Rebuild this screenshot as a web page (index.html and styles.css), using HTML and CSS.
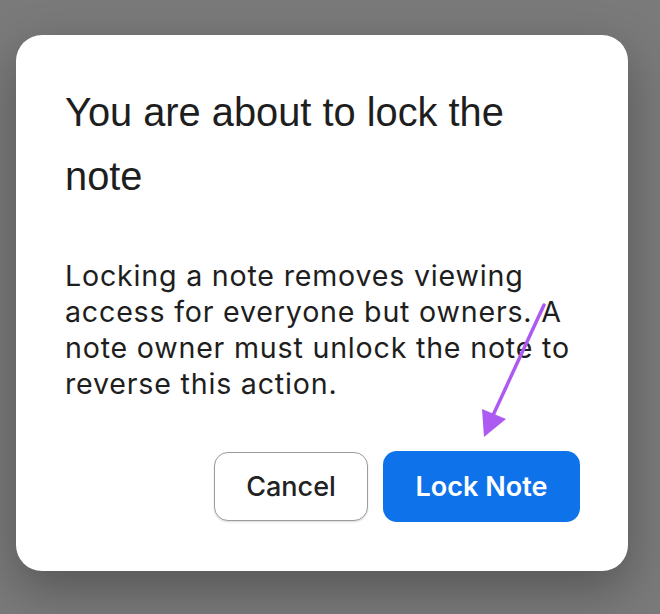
FILE: index.html
```html
<!DOCTYPE html>
<html lang="en">

<head>
    <meta charset="UTF-8">
    <meta name="viewport" content="width=device-width, initial-scale=1.0">
    <title>Lock note</title>
    <link rel="stylesheet" href="styles.css">
</head>

<body>
    <div class="dialog">
        <h1 class="dialog-title">You are about to lock the note</h1>
        <p class="dialog-text">Locking a note removes viewing access for everyone but owners. A note owner must unlock the note to reverse this action.</p>
        <div class="dialog-actions">
            <button class="btn btn-cancel">Cancel</button>
            <button class="btn btn-primary">Lock Note</button>
        </div>
    </div>

    <!-- annotation arrow -->
    <svg class="arrow" width="660" height="614" viewBox="0 0 660 614">
        <line x1="544" y1="305" x2="489" y2="424" stroke="#ad5af2" stroke-width="3.5" stroke-linecap="round" />
        <polygon points="484,437 482,409 506,419" fill="#ad5af2" />
    </svg>
</body>

</html>
```

FILE: styles.css
```css
:root {
    --page-bg: #7a7a7a;
    --text: #1e1e1e;
    --blue: #0e73ea;
}

body {
    margin: 0;
    min-height: 614px;
    background-color: var(--page-bg);
    position: relative;
    overflow: hidden;
}

.dialog {
    box-sizing: border-box;
    width: 612px;
    height: 536px;
    margin: 35px 0 0 16px;
    padding: 45px 48px 49px 49px;
    background: #ffffff;
    border-radius: 26px;
    box-shadow: 0 18px 50px rgba(0, 0, 0, 0.3);
    display: flex;
    flex-direction: column;
}

.dialog-title {
    margin: 0;
    width: 480px;
    font-family: "Liberation Sans", Arial, sans-serif;
    font-size: 39.8px;
    font-weight: normal;
    line-height: 64px;
    color: var(--text);
}

.dialog-text {
    margin: 50px 0 0;
    width: 525px;
    font-family: Inter, "Noto Sans", sans-serif;
    font-size: 28.6px;
    letter-spacing: 0.8px;
    line-height: 36px;
    color: var(--text);
}

.dialog-actions {
    margin-top: auto;
    display: flex;
    justify-content: flex-end;
    align-items: center;
    gap: 15px;
}

.btn {
    font-family: Inter, "Noto Sans", sans-serif;
    font-size: 27px;
    border-radius: 14px;
    cursor: pointer;
}

.btn-cancel {
    width: 154px;
    height: 69px;
    background: #ffffff;
    color: #222222;
    font-weight: 500;
    border: 1.5px solid #9c9c9c;
    box-shadow: 0 1px 2px rgba(0, 0, 0, 0.15);
}

.btn-primary {
    width: 197px;
    height: 71px;
    background: var(--blue);
    color: #ffffff;
    font-weight: 600;
    border: none;
}

.arrow {
    position: absolute;
    top: 0;
    left: 0;
    pointer-events: none;
}
```
